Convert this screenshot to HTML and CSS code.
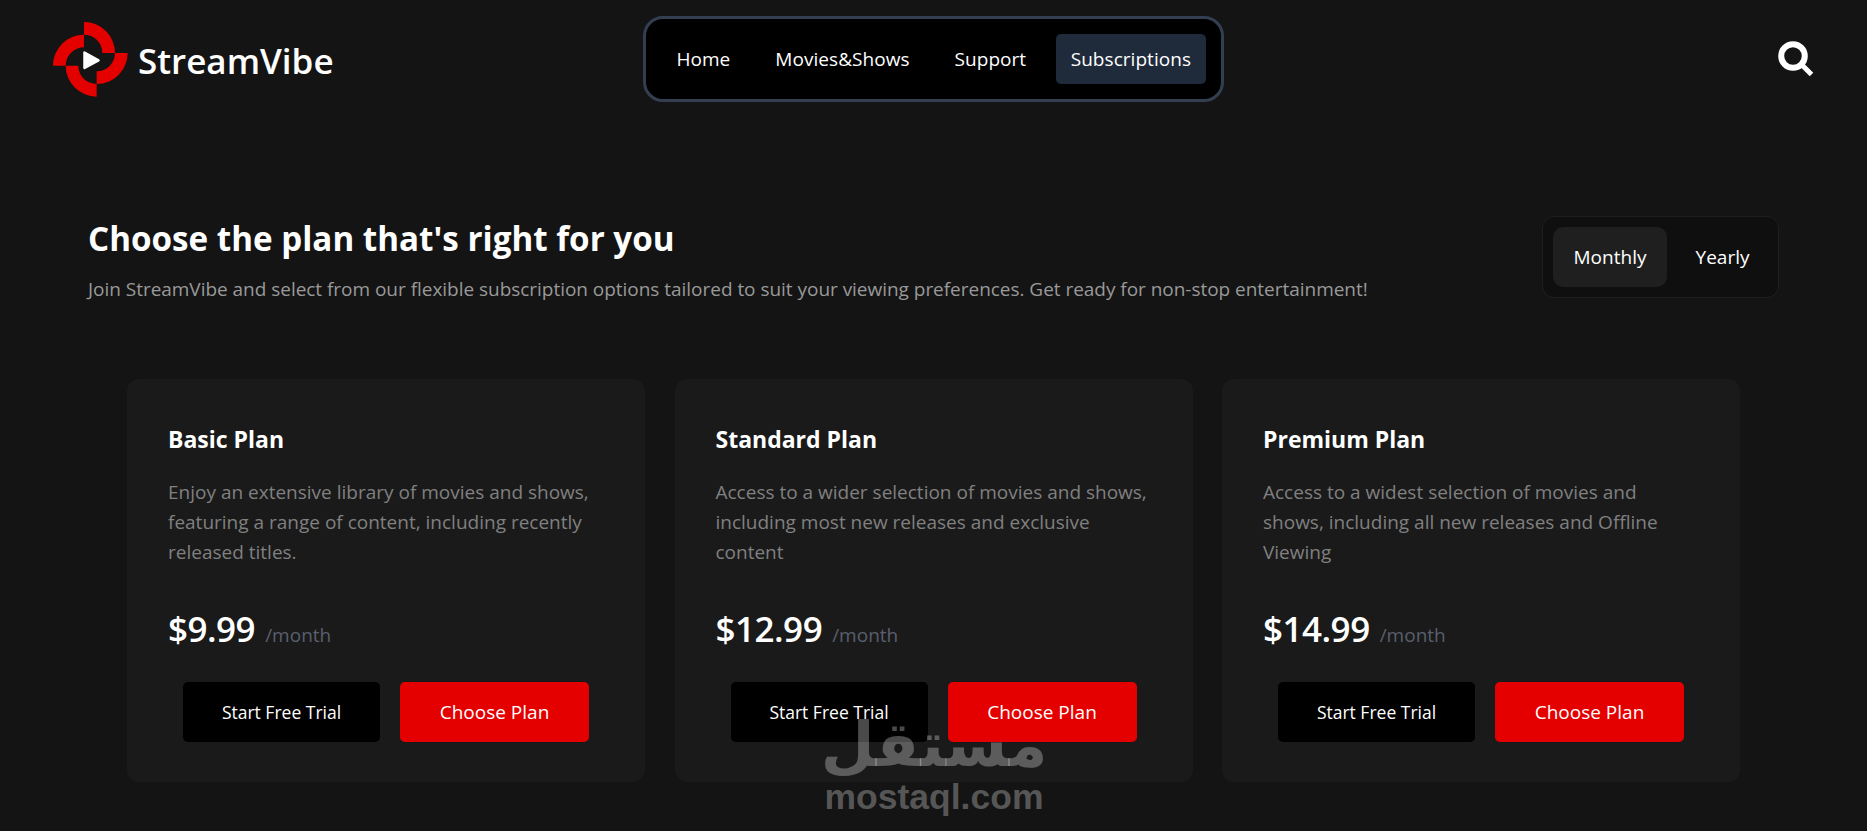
FILE: index.html
```html
<!DOCTYPE html>
<html lang="en">
<head>
    <meta charset="UTF-8">
    <title>StreamVibe - Subscriptions</title>
    <link rel="stylesheet" href="styles.css">
</head>
<body>
    <header class="header">
        <a class="logo" href="#">
            <svg class="logo-icon" viewBox="0 0 75 75">
                <g fill="#e50000">
                    <path d="M31 0 A31 31 0 0 1 62 31 L49.33 31 A18.33 18.33 0 0 0 31 12.67 Z"/>
                    <path d="M74.67 31 A31 31 0 0 1 43.67 62 L43.67 49.33 A18.33 18.33 0 0 0 62 31 Z"/>
                    <path d="M43.67 74.67 A31 31 0 0 1 12.67 43.67 L25.33 43.67 A18.33 18.33 0 0 0 43.67 62 Z"/>
                    <path d="M0 43.67 A31 31 0 0 1 31 12.67 L31 25.33 A18.33 18.33 0 0 0 12.67 43.67 Z"/>
                </g>
                <path fill="#fff" stroke="#fff" stroke-width="2.5" stroke-linejoin="round" d="M31.5 30.5 L45.5 38.3 L31.5 46 Z"/>
            </svg>
            <span>StreamVibe</span>
        </a>
        <nav class="nav">
            <a href="#">Home</a>
            <a href="#">Movies&amp;Shows</a>
            <a href="#">Support</a>
            <a href="#" class="active">Subscriptions</a>
        </nav>
        <a class="search" href="#">
            <svg viewBox="0 0 36 36" fill="none" stroke="#fff">
                <circle cx="15" cy="15" r="11.8" stroke-width="6"/>
                <path d="M24 24 L33.5 33.5" stroke-width="5"/>
            </svg>
        </a>
    </header>

    <section class="plans">
        <div class="plans-head">
            <div>
                <h1>Choose the plan that's right for you</h1>
                <p>Join StreamVibe and select from our flexible subscription options tailored to suit your viewing preferences. Get ready for non-stop entertainment!</p>
            </div>
            <div class="toggle">
                <button class="on">Monthly</button>
                <button>Yearly</button>
            </div>
        </div>

        <div class="cards">
            <div class="card">
                <h2>Basic Plan</h2>
                <p class="desc">Enjoy an extensive library of movies and shows, featuring a range of content, including recently released titles.</p>
                <div class="price"><strong>$9.99</strong><span>/month</span></div>
                <div class="actions">
                    <button class="btn-dark">Start Free Trial</button>
                    <button class="btn-red">Choose Plan</button>
                </div>
            </div>
            <div class="card">
                <h2>Standard Plan</h2>
                <p class="desc">Access to a wider selection of movies and shows, including most new releases and exclusive content</p>
                <div class="price"><strong>$12.99</strong><span>/month</span></div>
                <div class="actions">
                    <button class="btn-dark">Start Free Trial</button>
                    <button class="btn-red">Choose Plan</button>
                </div>
            </div>
            <div class="card">
                <h2>Premium Plan</h2>
                <p class="desc">Access to a widest selection of movies and shows, including all new releases and Offline Viewing</p>
                <div class="price"><strong>$14.99</strong><span>/month</span></div>
                <div class="actions">
                    <button class="btn-dark">Start Free Trial</button>
                    <button class="btn-red">Choose Plan</button>
                </div>
            </div>
        </div>
    </section>

    <div class="watermark">
        <div class="wm-ar" dir="rtl" lang="ar">مستقل</div>
        <div class="wm-en">mostaql.com</div>
    </div>
</body>
</html>
```

FILE: styles.css
```css
* {
    box-sizing: border-box;
}
html, body {
    height: 831px;
    overflow: hidden;
}
body {
    margin: 0;
    background-color: #141414;
    color: #fff;
    font-family: "Open Sans", "Noto Sans", Arial, sans-serif;
    position: relative;
}
a {
    color: inherit;
    text-decoration: none;
}
button {
    font-family: inherit;
    border: none;
    color: #fff;
    padding: 0;
}
.header {
    display: grid;
    grid-template-columns: 1fr auto 1fr;
    align-items: center;
    height: 102px;
    padding: 16px 53px 0;
}
.logo {
    display: flex;
    align-items: center;
    gap: 10px;
    font-size: 35px;
    font-weight: 600;
}
.logo span {
    padding-top: 2px;
}
.logo-icon {
    width: 75px;
    height: 75px;
}
.nav {
    display: flex;
    align-items: center;
    gap: 15px;
    height: 86px;
    padding: 0 15px;
    background-color: #000;
    border: 3px solid #333f50;
    border-radius: 20px;
    font-size: 19px;
    letter-spacing: 0.05px;
}
.nav a {
    padding: 12px 15px;
    border-radius: 5px;
}
.nav a.active {
    padding: 12px 14.5px;
    background-color: #1f2a3a;
}
.search {
    justify-self: end;
}
.search svg {
    display: block;
    width: 36px;
    height: 36px;
}
.plans {
    padding: 0 88px;
}
.plans-head {
    display: flex;
    justify-content: space-between;
    align-items: flex-start;
    margin-top: 114px;
}
.plans-head h1 {
    margin: 0;
    padding-top: 1px;
    font-size: 33.2px;
    font-weight: 700;
    line-height: 44px;
}
.plans-head p {
    margin: 14px 0 0;
    font-size: 19px;
    line-height: 28px;
    color: #999;
    letter-spacing: -0.03px;
}
.toggle {
    display: flex;
    gap: 10px;
    width: 237px;
    height: 82px;
    padding: 10px;
    background-color: #0f0f0f;
    border: 1px solid #1f1f1f;
    border-radius: 12px;
}
.toggle button {
    flex: none;
    background: none;
    font-size: 19px;
    width: 91px;
    border-radius: 10px;
}
.toggle button.on {
    width: 114px;
    background-color: #1f1f1f;
}
.cards {
    display: grid;
    grid-template-columns: repeat(3, 518px);
    gap: 29.5px;
    margin-top: 76px;
    margin-left: 39px;
}
.card {
    height: 403px;
    padding: 42px 41px 0;
    background-color: #1a1a1a;
    border-radius: 12px;
}
.card h2 {
    margin: 0;
    font-size: 23px;
    font-weight: 700;
    line-height: 36px;
}
.desc {
    margin: 20px 0 0;
    height: 90px;
    font-size: 19px;
    line-height: 30px;
    color: #808080;
}
.price {
    display: flex;
    align-items: baseline;
    gap: 10px;
    margin-top: 37px;
    line-height: 50px;
}
.price strong {
    font-size: 35px;
    font-weight: 600;
    letter-spacing: -0.5px;
}
.price span {
    font-size: 19px;
    color: #595f6d;
}
.actions {
    display: flex;
    gap: 20px;
    margin-top: 22px;
    padding-left: 15px;
}
.actions button {
    height: 60px;
    border-radius: 5px;
}
.btn-dark {
    width: 197px;
    background-color: #000;
    font-size: 17.5px;
}
.btn-red {
    width: 189px;
    background-color: #e50000;
    font-size: 19px;
}
.watermark {
    position: absolute;
    left: 804px;
    top: 712px;
    width: 260px;
    text-align: center;
    color: rgba(255, 255, 255, 0.29);
    pointer-events: none;
}
.wm-ar {
    font-family: "DejaVu Sans", sans-serif;
    font-weight: 700;
    font-size: 62px;
    line-height: 66px;
}
.wm-en {
    font-family: "Liberation Sans", Arial, sans-serif;
    font-weight: 700;
    font-size: 35.5px;
    line-height: 38px;
}
```
